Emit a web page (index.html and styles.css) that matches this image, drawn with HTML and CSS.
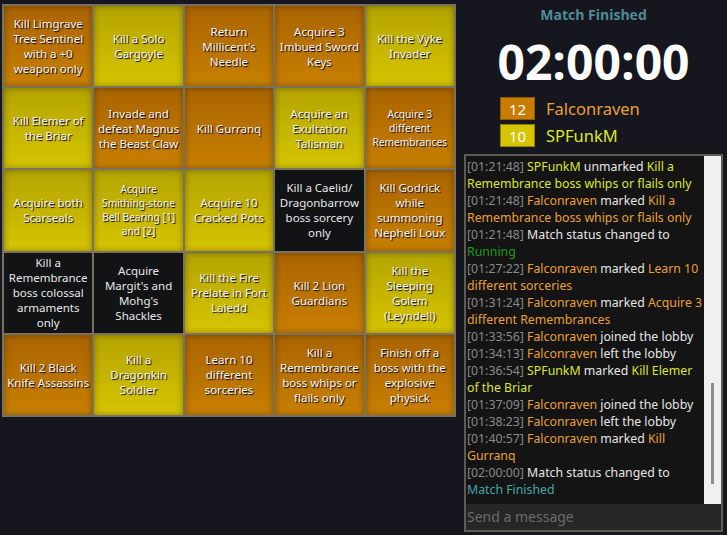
FILE: index.html
```html
<!DOCTYPE html>
<html>
<head>
<meta charset="utf-8">
<link rel="stylesheet" href="styles.css">
</head>
<body>
<div class="app">
  <div class="board">
    <div class="cell orange"><span>Kill Limgrave Tree Sentinel with a +0 weapon only</span></div>
    <div class="cell yellow"><span>Kill a Solo Gargoyle</span></div>
    <div class="cell orange"><span>Return Millicent's Needle</span></div>
    <div class="cell orange"><span>Acquire 3 Imbued Sword Keys</span></div>
    <div class="cell yellow"><span>Kill the Vyke Invader</span></div>

    <div class="cell yellow"><span>Kill Elemer of the Briar</span></div>
    <div class="cell orange"><span>Invade and defeat Magnus the Beast Claw</span></div>
    <div class="cell orange"><span>Kill Gurranq</span></div>
    <div class="cell yellow"><span>Acquire an Exultation Talisman</span></div>
    <div class="cell orange small"><span>Acquire 3 different Remembrances</span></div>

    <div class="cell yellow"><span>Acquire both Scarseals</span></div>
    <div class="cell yellow small"><span>Acquire Smithing-stone Bell Bearing [1] and [2]</span></div>
    <div class="cell yellow"><span>Acquire 10 Cracked Pots</span></div>
    <div class="cell black"><span>Kill a Caelid/<wbr>Dragonbarrow boss sorcery only</span></div>
    <div class="cell orange"><span>Kill Godrick while summoning Nepheli Loux</span></div>

    <div class="cell black"><span>Kill a Remembrance boss colossal armaments only</span></div>
    <div class="cell black"><span>Acquire Margit's and Mohg's Shackles</span></div>
    <div class="cell yellow"><span>Kill the Fire Prelate in Fort Laiedd</span></div>
    <div class="cell orange"><span>Kill 2 Lion Guardians</span></div>
    <div class="cell yellow"><span>Kill the Sleeping Golem (Leyndell)</span></div>

    <div class="cell orange"><span>Kill 2 Black Knife Assassins</span></div>
    <div class="cell yellow"><span>Kill a Dragonkin Soldier</span></div>
    <div class="cell orange"><span>Learn 10 different sorceries</span></div>
    <div class="cell orange"><span>Kill a Remembrance boss whips or flails only</span></div>
    <div class="cell orange"><span>Finish off a boss with the explosive physick</span></div>
  </div>

  <div class="side">
    <div class="status">Match Finished</div>
    <div class="timer">02:00:00</div>
    <div class="players">
      <div class="player">
        <div class="score score-orange">12</div>
        <div class="pname c-orange">Falconraven</div>
      </div>
      <div class="player">
        <div class="score score-yellow">10</div>
        <div class="pname c-yellow">SPFunkM</div>
      </div>
    </div>
    <div class="chat">
      <div class="chat-body">
        <div class="log">
          <div class="msg"><span class="ts">[01:21:48]</span> <span class="c-yellow">SPFunkM</span> unmarked <span class="c-yellow">Kill a Remembrance boss whips or flails only</span></div>
          <div class="msg"><span class="ts">[01:21:48]</span> <span class="c-orange">Falconraven</span> marked <span class="c-orange">Kill a Remembrance boss whips or flails only</span></div>
          <div class="msg"><span class="ts">[01:21:48]</span> Match status changed to <span class="c-green">Running</span></div>
          <div class="msg"><span class="ts">[01:27:22]</span> <span class="c-orange">Falconraven</span> marked <span class="c-orange">Learn 10 different sorceries</span></div>
          <div class="msg"><span class="ts">[01:31:24]</span> <span class="c-orange">Falconraven</span> marked <span class="c-orange">Acquire 3 different Remembrances</span></div>
          <div class="msg"><span class="ts">[01:33:56]</span> <span class="c-orange">Falconraven</span> joined the lobby</div>
          <div class="msg"><span class="ts">[01:34:13]</span> <span class="c-orange">Falconraven</span> left the lobby</div>
          <div class="msg"><span class="ts">[01:36:54]</span> <span class="c-yellow">SPFunkM</span> marked <span class="c-yellow">Kill Elemer of the Briar</span></div>
          <div class="msg"><span class="ts">[01:37:09]</span> <span class="c-orange">Falconraven</span> joined the lobby</div>
          <div class="msg"><span class="ts">[01:38:23]</span> <span class="c-orange">Falconraven</span> left the lobby</div>
          <div class="msg"><span class="ts">[01:40:57]</span> <span class="c-orange">Falconraven</span> marked <span class="c-orange">Kill Gurranq</span></div>
          <div class="msg"><span class="ts">[02:00:00]</span> Match status changed to <span class="c-teal">Match Finished</span></div>
        </div>
        <div class="scrollbar"><div class="thumb"></div></div>
      </div>
      <div class="input">Send a message</div>
    </div>
  </div>
</div>
</body>
</html>
```
FILE: styles.css
```css
* { box-sizing: border-box; }
html, body { margin: 0; padding: 0; }
body {
  background: #16161f;
  width: 727px;
  height: 535px;
  overflow: hidden;
  font-family: "Noto Sans", "Open Sans", sans-serif;
}
.app {
  display: flex;
  align-items: flex-start;
}
.board {
  margin: 4px 0 0 2px;
  width: 454px;
  height: 413px;
  padding: 2px;
  gap: 2px;
  background: #79725f;
  display: grid;
  grid-template-columns: repeat(5, 1fr);
  grid-template-rows: repeat(5, 1fr);
}
.cell {
  display: flex;
  align-items: center;
  justify-content: center;
  text-align: center;
  padding: 0 2px;
  color: #f4f4f4;
  font-size: 11.5px;
  line-height: 15px;
  text-shadow: 1px 1px 1px #000;
  box-shadow: inset 0 0 6px rgba(0,0,0,0.35);
}
.cell.small { font-size: 10.2px; line-height: 14px; }
.orange { background: linear-gradient(#a96400, #c88000); }
.yellow { background: linear-gradient(#b4a400, #d6c500); }
.black { background: #111315; color: #e8e8e8; text-shadow: none; box-shadow: none; }

.side {
  margin-left: 8px;
  width: 259px;
  display: flex;
  flex-direction: column;
}
.status {
  margin-top: 5px;
  text-align: center;
  font-family: "Open Sans", sans-serif;
  font-weight: 700;
  font-size: 14px;
  line-height: 20px;
  color: #4f8c96;
}
.timer {
  margin-top: 6px;
  text-align: center;
  font-family: "Open Sans", sans-serif;
  font-weight: 700;
  font-size: 48px;
  line-height: 62px;
  color: #ffffff;
}
.players {
  margin-top: 4px;
  padding-left: 36px;
  display: flex;
  flex-direction: column;
  gap: 4px;
}
.player {
  display: flex;
  align-items: center;
  gap: 11px;
}
.score {
  width: 35px;
  height: 23px;
  display: flex;
  align-items: center;
  justify-content: center;
  color: #fff;
  font-size: 15px;
}
.score-orange { background: #c97d00; border: 1px solid #8c5800; }
.score-yellow { background: #d6c400; border: 1px solid #8e8200; }
.pname { font-size: 16.5px; }
.c-orange { color: #eaa032; }
.c-yellow { color: #dde62a; }
.c-green { color: #1c9a1c; }
.c-teal { color: #4aa6a6; }

.chat {
  margin-top: 7px;
  height: 378px;
  border: 2px solid #5f5b52;
  display: flex;
  flex-direction: column;
}
.chat-body {
  flex: 1;
  display: flex;
  background: #141414;
  overflow: hidden;
}
.log {
  flex: 1;
  padding: 2px 0 0 1px;
  font-size: 12.3px;
  line-height: 17px;
  color: #e6e6e6;
}
.ts { color: #8a8a8a; }
.scrollbar {
  width: 17px;
  background: #f0f0f0;
  display: flex;
  justify-content: center;
  padding-top: 227px;
}
.thumb {
  width: 3px;
  height: 101px;
  background: #8d8d8d;
}
.input {
  height: 26px;
  background: #262626;
  color: #6c6c6c;
  font-size: 14px;
  line-height: 25px;
  padding-left: 1px;
}
```
